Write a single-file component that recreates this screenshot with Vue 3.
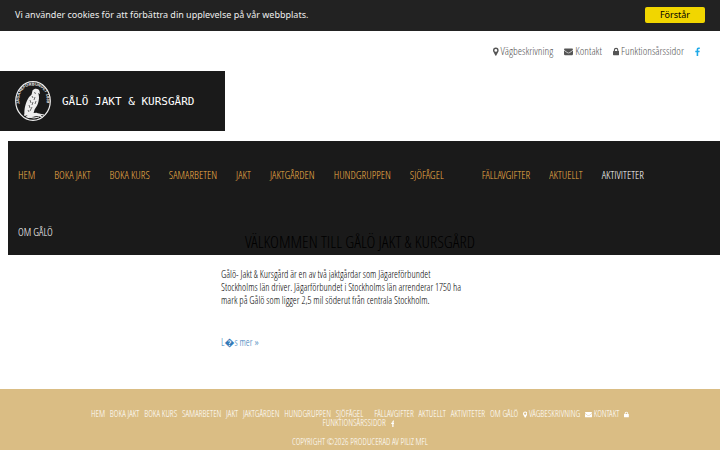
<template>
  <div class="page">
    <div v-if="showCookies" class="cookie-bar">
      <span>Vi använder cookies för att förbättra din upplevelse på vår webbplats.</span>
      <button type="button" class="btn-accept" @click="showCookies = false">Förstår</button>
    </div>

    <header>
      <div class="top-links">
        <a v-for="link in contactLinks" :key="link.icon" href="#" :class="link.icon" :aria-label="link.label || 'Facebook'">
          <svg class="icon" :viewBox="icons[link.icon].box" aria-hidden="true"><path :d="icons[link.icon].path" /></svg>
          {{ link.label }}
        </a>
      </div>
      <a href="#" class="brand">
        <svg class="emblem" viewBox="0 0 38 42">
          <ellipse cx="19" cy="21" rx="17.3" ry="19.4" fill="none" stroke="#eee" stroke-width="1.2" />
          <path id="emblem-arc" d="M5.500 24 C3.500 11 11 5.500 19 5.500 S34.500 11 32.500 24" fill="none" />
          <text><textPath href="#emblem-arc">JÄGAREFÖRBUNDET 1830</textPath></text>
          <path class="bird" d="M18.500 10.500c2-2.500 6-2 7 .4l.5 3-1.800-.9c.6 2 1.300 4.500.4 8-.6 3.600-2.300 6-4 8.500l-1 3.500 3-.3 4 1.700 2 3-5-1.500-4 .5-5 1.500-3-1 2-2-3 1c-1-7 1.500-15 4.500-19l2.500-2.500z" />
          <path class="feathers" d="M20 12.500l2 1M18 16l1 2M21 17l-1 3M16 20l1 3M19 22l-1 3M15 25l1 3M18 27l-2 4M14 30l1 2M22 21l-1 3" />
          <path class="branch" d="M10 35l5-1 4 2 6-2 5 1M14 37l6 1 5-1" />
        </svg>
        <span>GÅLÖ JAKT &amp; KURSGÅRD</span>
      </a>
    </header>

    <nav class="main-nav">
      <a v-for="item in menu" :key="item.label" href="#" :class="{ light: item.light, spaced: item.spaced }">{{ item.label }}</a>
    </nav>

    <main>
      <h1>VÄLKOMMEN TILL GÅLÖ JAKT &amp; KURSGÅRD</h1>
      <div class="intro">
        <p>
          Gålö- Jakt &amp; Kursgård är en av två jaktgårdar som Jägareförbundet
          Stockholms län driver. Jägarförbundet i Stockholms län arrenderar 1750 ha
          mark på Gålö som ligger 2,5 mil söderut från centrala Stockholm.
        </p>
        <a href="#">L&#xFFFD;s mer »</a>
      </div>
    </main>

    <footer>
      <div class="footer-links">
        <template v-for="item in menu" :key="item.label">
          <a href="#" :class="{ spaced: item.spaced }">{{ item.label }}</a>{{ ' ' }}
        </template>
        <template v-for="link in contactLinks" :key="link.icon">
          <a href="#" :aria-label="link.label || 'Facebook'"><svg class="icon" :viewBox="icons[link.icon].box" aria-hidden="true"><path :d="icons[link.icon].path" /></svg> {{ link.label.toUpperCase() }}</a>{{ ' ' }}
        </template>
      </div>
      <p>COPYRIGHT ©2026 PRODUCERAD AV PILIZ MFL</p>
    </footer>
  </div>
</template>

<script setup>
import { ref } from 'vue';

const showCookies = ref(true);

const menu = [
  { label: 'HEM' },
  { label: 'BOKA JAKT' },
  { label: 'BOKA KURS' },
  { label: 'SAMARBETEN' },
  { label: 'JAKT' },
  { label: 'JAKTGÅRDEN' },
  { label: 'HUNDGRUPPEN' },
  { label: 'SJÖFÅGEL' },
  { label: 'FÄLLAVGIFTER', spaced: true },
  { label: 'AKTUELLT' },
  { label: 'AKTIVITETER', light: true },
  { label: 'OM GÅLÖ', light: true },
];

const contactLinks = [
  { icon: 'marker', label: 'Vägbeskrivning' },
  { icon: 'envelope', label: 'Kontakt' },
  { icon: 'lock', label: 'Funktionsårssidor' },
  { icon: 'facebook', label: '' },
];

const icons = {
  marker: {
    box: '0 0 10 16',
    path: 'M5 1a5 5 0 0 0-5 5c0 1 .2 1.700.6 2.400L4.200 15c.3.600 1.300.600 1.600 0l3.600-6.600C9.800 7.700 10 7 10 6a5 5 0 0 0-5-5zm0 2.500a2.500 2.500 0 1 1 0 5 2.500 2.500 0 0 1 0-5z',
  },
  envelope: {
    box: '0 0 16 16',
    path: 'M0 6.200V13c0 .8.600 1.500 1.500 1.500h13c.8 0 1.500-.7 1.500-1.500V6.200l-6 4.300c-1.300 1-2.700 1-4 0zM1.500 2.500C.6 2.500 0 3.100 0 4c0 .7.500 1.300 1 1.700l5.500 4c1 .7 2 .7 3 0l5.500-4c.5-.4 1-1 1-1.700 0-.9-.7-1.500-1.500-1.500z',
  },
  lock: {
    box: '0 0 11 16',
    path: 'M1.500 7V5.500a4 4 0 0 1 8 0V7h.5c.6 0 1 .4 1 1v5.500c0 .6-.4 1-1 1H1c-.6 0-1-.4-1-1V8c0-.6.400-1 1-1zm2 0h4V5.500a2 2 0 0 0-4 0z',
  },
  facebook: {
    box: '0 0 9 16',
    path: 'M8.500 1v2.500H7c-1.100 0-1.300.5-1.300 1.300v1.700h2.700L8 9.200H5.700V16H2.900V9.200H.5V6.500h2.400v-2C2.900 2.200 4.300.9 6.400.9z',
  },
};
</script>

<style>
body {
  background: #fff;
}
</style>

<style scoped>
.page {
  font-family: "Open Sans Condensed Light", "Open Sans Condensed", "Roboto Condensed", sans-serif;
  color: #000;
}
a { text-decoration: none; }
.icon { fill: currentColor; height: 9px; vertical-align: -1px; }
.cookie-bar {
  display: flex;
  align-items: center;
  justify-content: space-between;
  padding: 7px 15px 8px;
  background: #222;
  color: #eee;
  font: 9px/16px "Noto Sans", sans-serif;
}
.btn-accept {
  width: 60px;
  height: 16px;
  padding: 0;
  border: 0;
  border-radius: 2px;
  background: #f1d600;
  color: #000;
  font: inherit;
  cursor: pointer;
}
.top-links {
  display: flex;
  justify-content: flex-end;
  gap: 11px;
  padding: 14px 20px;
  font-size: 11px;
  line-height: 12px;
}
.top-links a { color: #555; }
.top-links .facebook { color: #1da9e8; }
.brand {
  display: flex;
  align-items: center;
  gap: 10px;
  width: 225px;
  height: 60px;
  padding-left: 14px;
  box-sizing: border-box;
  background: #1a1a1a;
  color: #fff;
  font: 11px "DejaVu Sans Mono", monospace;
}
.emblem { width: 38px; height: 42px; }
.emblem text { font: bold 4px "Liberation Sans", sans-serif; fill: #eee; }
.bird { fill: #eee; }
.feathers { fill: none; stroke: #333; stroke-width: 0.7; }
.branch { fill: none; stroke: #eee; stroke-width: 1.2; }
.main-nav {
  display: flex;
  flex-wrap: wrap;
  column-gap: 19px;
  margin: 10px 0 0 8px;
  padding: 0 32px 0 10px;
  background: #1a1a1a;
  font-size: 11px;
}
.main-nav a { padding-top: 11px; line-height: 46px; color: #f0b048; }
.main-nav a.light { color: #fff; }
.main-nav .spaced { margin-left: 19px; }
main {
  position: relative;
  margin-top: -24px;
  padding-bottom: 40px;
}
h1 {
  margin: 0;
  color: #000;
  font-size: 17px;
  font-weight: 400;
  line-height: 22px;
  text-align: center;
}
.intro {
  width: 244px;
  margin: 0 auto;
  padding: 15px 34px 0 0;
  font-size: 10px;
  line-height: 13px;
}
.intro p { margin: 0 0 29px; }
.intro a { color: #337ab7; }
footer {
  padding: 20px 85px 4px;
  background: #dabd84;
  color: #fff;
  font-size: 9px;
  line-height: 9px;
  text-align: center;
}
footer a { margin-right: 3px; color: #fff; }
footer .spaced { margin-left: 6px; }
footer .icon { height: 7px; }
footer p { margin: 10px 0 0; }
</style>
